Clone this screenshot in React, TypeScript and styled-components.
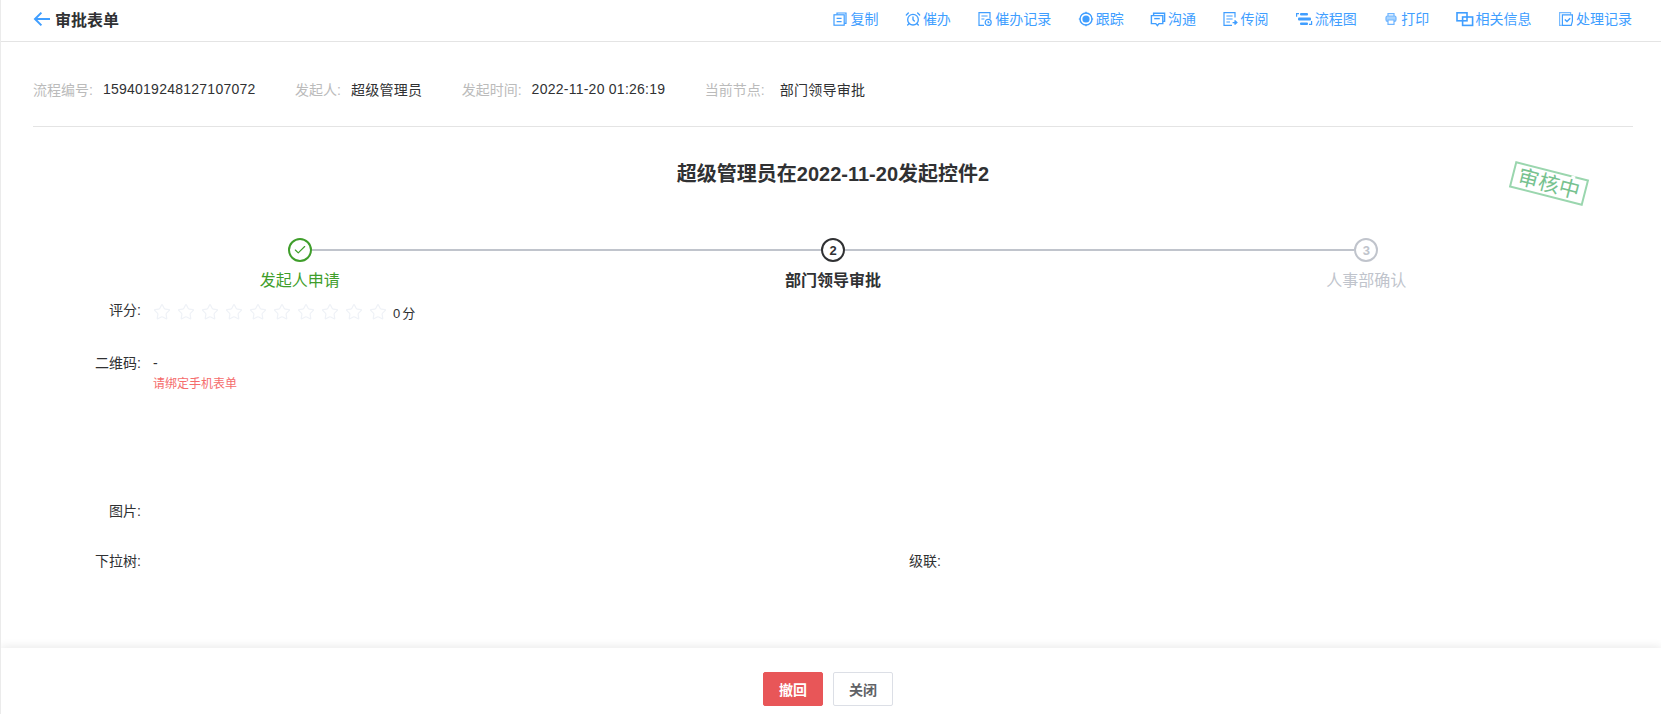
import React from "react";
import styled, { createGlobalStyle } from "styled-components";
import { Star, Check, AlarmClock } from "lucide-react";

const GlobalStyle = createGlobalStyle`
  html, body { margin: 0; padding: 0; height: 100%; background: #fff; }
  #root { height: 100%; }
  body {
    font-family: "Liberation Sans", "Noto Sans CJK SC", sans-serif;
    font-size: 14px;
    color: #303133;
  }
`;

const BLUE = "#409eff";

const Svg = ({ children }: { children: React.ReactNode }) => (
  <svg width="16" height="16" viewBox="0 0 16 16" fill="none" stroke={BLUE} strokeWidth="1.2">
    {children}
  </svg>
);

const icons: Record<string, React.ReactNode> = {
  copy: (
    <Svg>
      <path d="M5 3.6V2h9v10.4h-1.8" />
      <rect x="2" y="3.8" width="10.2" height="10.4" />
      <path d="M4.6 7.4h5M4.6 10.6h5" />
    </Svg>
  ),
  urge: <AlarmClock size={16} color={BLUE} strokeWidth={2} />,
  urgeLog: (
    <Svg>
      <path d="M7 14.4H2V1.6h11v6.2" />
      <path d="M4.4 5h6.2M4.4 8h3" />
      <circle cx="11.2" cy="11.4" r="3" />
      <path d="M11.2 10v1.6h1.3" />
    </Svg>
  ),
  track: (
    <Svg>
      <circle cx="8" cy="8" r="6" strokeWidth="1.4" />
      <circle cx="8" cy="8" r="3.6" fill={BLUE} stroke="none" />
      <path d="M8 0.8v2M8 13.2v2M0.8 8h2M13.2 8h2" strokeWidth="1.2" />
    </Svg>
  ),
  talk: (
    <Svg>
      <path d="M3.6 4V2.2h11v8.2h-1.6" strokeWidth="1.4" />
      <path d="M1.4 4.6h11.4v8H9l-1.6 2-1.6-2H1.4z" strokeWidth="1.4" />
      <path d="M4.2 7.6h5.6" strokeWidth="1.4" />
    </Svg>
  ),
  pass: (
    <Svg>
      <path d="M13 6.5V1.6H2v12.8h8" />
      <path d="M4.4 5h6.2M4.4 8h6.2M4.4 11h3.6" />
      <path d="M10.6 11.6h3M12.6 9.6l2.2 2-2.2 2" fill={BLUE} strokeWidth="1.4" />
    </Svg>
  ),
  flow: (
    <svg width="18" height="16" viewBox="0 0 18 16" fill={BLUE}>
      <path d="M1 2h3v1.2H2.2v2.6H1zM16 10h1.2v4H14v-1.2h2z" />
      <rect x="5" y="2" width="8" height="2.6" rx="1" />
      <rect x="3" y="6.6" width="13" height="3" rx="1" />
      <rect x="5" y="11.4" width="8" height="2.6" rx="1" />
    </svg>
  ),
  print: (
    <svg width="16" height="16" viewBox="0 0 16 16" fill="none" stroke="#6fb5ff" strokeWidth="1.2">
      <path d="M5 5V2.6h6V5" />
      <rect x="3" y="5" width="10" height="5.4" rx="1.6" fill="#a9d4ff" />
      <path d="M5 9h6v4.4H5z" fill="#fff" />
    </svg>
  ),
  related: (
    <svg width="18" height="16" viewBox="0 0 18 16" fill="none" stroke={BLUE} strokeWidth="1.6">
      <rect x="1" y="1.8" width="10" height="8" />
      <rect x="6.6" y="6" width="10" height="8.4" />
    </svg>
  ),
  log: (
    <Svg>
      <path d="M3.8 14.4H1.6V1.6h11v2" strokeOpacity="0.7" />
      <path d="M4.4 3.8h10v6.4l-1.2 4.2H4.4z" />
      <path d="M6.8 8.4l2.2 2.2 3.2-3.4" strokeWidth="1.4" />
    </Svg>
  ),
};

const actions = [
  { key: "copy", label: "复制" },
  { key: "urge", label: "催办" },
  { key: "urgeLog", label: "催办记录" },
  { key: "track", label: "跟踪" },
  { key: "talk", label: "沟通" },
  { key: "pass", label: "传阅" },
  { key: "flow", label: "流程图" },
  { key: "print", label: "打印" },
  { key: "related", label: "相关信息" },
  { key: "log", label: "处理记录" },
];

const meta = [
  { label: "流程编号:", value: "1594019248127107072", gap: 10 },
  { label: "发起人:", value: "超级管理员", gap: 10 },
  { label: "发起时间:", value: "2022-11-20 01:26:19", gap: 10 },
  { label: "当前节点:", value: "部门领导审批", gap: 15 },
];

type StepState = "done" | "active" | "wait";

const steps: { label: string; state: StepState; mark: React.ReactNode }[] = [
  { label: "发起人申请", state: "done", mark: <Check size={14} strokeWidth={2} /> },
  { label: "部门领导审批", state: "active", mark: "2" },
  { label: "人事部确认", state: "wait", mark: "3" },
];

const stepColors: Record<StepState, string> = {
  done: "#3f9e2b",
  active: "#303133",
  wait: "#c0c4cc",
};

export default function App() {
  return (
    <>
      <GlobalStyle />
      <Page>
        <Header>
          <BackTitle>
            <svg width="18" height="16" viewBox="0 0 18 16" fill="none" stroke={BLUE} strokeWidth="2">
              <path d="M17 8H2M8.4 1.6L2 8l6.4 6.4" />
            </svg>
            <PageTitle>审批表单</PageTitle>
          </BackTitle>
          <Toolbar>
            {actions.map((a) => (
              <Action key={a.key}>
                {icons[a.key]}
                <span>{a.label}</span>
              </Action>
            ))}
          </Toolbar>
        </Header>

        <Main>
          <MetaRow>
            {meta.map((m) => (
              <MetaItem key={m.label} $gap={m.gap}>
                <MetaLabel>{m.label}</MetaLabel>
                <MetaValue>{m.value}</MetaValue>
              </MetaItem>
            ))}
          </MetaRow>

          <FormTitle>
            超级管理员在2022-11-20发起控件2
            <Stamp>审核中</Stamp>
          </FormTitle>

          <Steps>
            {steps.map((s, i) => (
              <Step key={s.label}>
                <StepHead>
                  <StepLine $hidden={i === 0} />
                  <StepCircle $state={s.state}>{s.mark}</StepCircle>
                  <StepLine $hidden={i === steps.length - 1} />
                </StepHead>
                <StepLabel $state={s.state}>{s.label}</StepLabel>
              </Step>
            ))}
          </Steps>

          <FormGrid>
            <FormRow $height={53} $wide>
              <FieldLabel>评分:</FieldLabel>
              <Rate>
                {Array.from({ length: 10 }).map((_, i) => (
                  <RateStar key={i}>
                    <Star size={18} color="#eff2f7" strokeWidth={1.6} />
                  </RateStar>
                ))}
                <RateText>0 分</RateText>
              </Rate>
            </FormRow>

            <FormRow $height={148} $wide>
              <FieldLabel>二维码:</FieldLabel>
              <div>
                <FieldValue>-</FieldValue>
                <FieldHint>请绑定手机表单</FieldHint>
              </div>
            </FormRow>

            <FormRow $height={50} $wide>
              <FieldLabel>图片:</FieldLabel>
            </FormRow>

            <FormRow $height={40}>
              <FieldLabel>下拉树:</FieldLabel>
            </FormRow>
            <FormRow $height={40}>
              <FieldLabel>级联:</FieldLabel>
            </FormRow>
          </FormGrid>
        </Main>

        <Footer>
          <DangerButton>撤回</DangerButton>
          <PlainButton>关闭</PlainButton>
        </Footer>
      </Page>
    </>
  );
}

const Page = styled.div`
  display: flex;
  flex-direction: column;
  height: 100vh;
  border-left: 1px solid #ebebeb;
  box-sizing: border-box;
  overflow: hidden;
`;

const Header = styled.header`
  display: flex;
  justify-content: space-between;
  align-items: center;
  height: 41px;
  flex: none;
  padding: 0 29px 0 32px;
  border-bottom: 1px solid #e4e4e4;
`;

const BackTitle = styled.div`
  display: flex;
  align-items: center;
  gap: 4px;
  margin-top: -4px;
`;

const PageTitle = styled.h1`
  margin: 0;
  font-size: 16px;
  font-weight: 700;
  color: #303133;
`;

const Toolbar = styled.nav`
  display: flex;
  align-items: center;
  gap: 26.4px;
  margin-top: -4px;
`;

const Action = styled.a`
  display: flex;
  align-items: center;
  gap: 2px;
  color: ${BLUE};
  font-size: 14px;
  line-height: 20px;
`;

const Main = styled.main`
  flex: 1;
  min-height: 0;
  padding: 0 28px 0 32px;
`;

const MetaRow = styled.div`
  display: flex;
  align-items: center;
  gap: 39.5px;
  height: 85px;
  padding-top: 10px;
  box-sizing: border-box;
  border-bottom: 1px solid #e4e4e4;
`;

const MetaItem = styled.div<{ $gap: number }>`
  display: flex;
  align-items: center;
  gap: ${(p) => p.$gap}px;
`;

const MetaLabel = styled.span`
  color: #bbbbbb;
`;

const MetaValue = styled.span`
  color: #303133;
  letter-spacing: 0.25px;
`;

const FormTitle = styled.h2`
  position: relative;
  margin: 0;
  height: 111px;
  padding-top: 34px;
  box-sizing: border-box;
  font-size: 20px;
  line-height: 26px;
  font-weight: 700;
  text-align: center;
  color: #303133;
`;

const Stamp = styled.div`
  position: absolute;
  right: 46px;
  top: 43px;
  width: 76px;
  height: 27px;
  border: 2px solid #9ad6ae;
  box-sizing: border-box;
  transform: rotate(14.4deg);
  color: #77c28f;
  font-size: 21px;
  line-height: 23px;
  font-weight: 400;
  text-align: center;

  &::after {
    content: "";
    position: absolute;
    top: -2px;
    right: 12px;
    width: 4px;
    height: 3px;
    background: #fff;
  }
`;

const Steps = styled.div`
  display: grid;
  grid-template-columns: repeat(3, 1fr);
`;

const Step = styled.div`
  display: flex;
  flex-direction: column;
  align-items: center;
`;

const StepHead = styled.div`
  display: flex;
  align-items: center;
  width: 100%;
`;

const StepLine = styled.div<{ $hidden: boolean }>`
  flex: 1;
  height: 2px;
  background: ${(p) => (p.$hidden ? "transparent" : "#c0c4cc")};
`;

const StepCircle = styled.div<{ $state: StepState }>`
  display: flex;
  align-items: center;
  justify-content: center;
  width: 24px;
  height: 24px;
  flex: none;
  box-sizing: border-box;
  border-radius: 50%;
  border: 2px solid ${(p) => stepColors[p.$state]};
  color: ${(p) => stepColors[p.$state]};
  font-size: 13px;
  font-weight: 700;
`;

const StepLabel = styled.div<{ $state: StepState }>`
  margin-top: 8px;
  font-size: 16px;
  line-height: 22px;
  font-weight: ${(p) => (p.$state === "active" ? 700 : 400)};
  color: ${(p) => stepColors[p.$state]};
`;

const FormGrid = styled.div`
  display: grid;
  grid-template-columns: 1fr 1fr;
  margin-top: 8px;
`;

const FormRow = styled.div<{ $height: number; $wide?: boolean }>`
  display: flex;
  align-items: flex-start;
  gap: 12px;
  height: ${(p) => p.$height}px;
  grid-column: ${(p) => (p.$wide ? "1 / -1" : "auto")};
`;

const FieldLabel = styled.label`
  width: 108px;
  flex: none;
  text-align: right;
  font-size: 14px;
  line-height: 20px;
  color: #303133;
`;

const Rate = styled.div`
  display: flex;
  align-items: center;
  height: 20px;
  margin-top: 2px;
`;

const RateStar = styled.span`
  display: flex;
  width: 24px;
  height: 18px;
`;

const RateText = styled.span`
  font-size: 13px;
  word-spacing: -1.5px;
`;

const FieldValue = styled.div`
  font-size: 14px;
  line-height: 20px;
`;

const FieldHint = styled.div`
  margin-top: 1px;
  font-size: 12px;
  line-height: 20px;
  color: #f56c6c;
`;

const Footer = styled.footer`
  display: flex;
  justify-content: center;
  align-items: flex-start;
  gap: 10px;
  height: 66px;
  flex: none;
  padding: 24px 6px 0 0;
  box-sizing: border-box;
  box-shadow: 0 -2px 8px rgba(0, 0, 0, 0.08);
`;

const DangerButton = styled.button`
  width: 60px;
  height: 34px;
  padding: 0;
  border: 1px solid #e85658;
  border-radius: 2px;
  background: #e85658;
  color: #fff;
  font: 700 14px "Liberation Sans", "Noto Sans CJK SC", sans-serif;
`;

const PlainButton = styled(DangerButton)`
  border-color: #dcdfe6;
  background: #fff;
  color: #606266;
`;
